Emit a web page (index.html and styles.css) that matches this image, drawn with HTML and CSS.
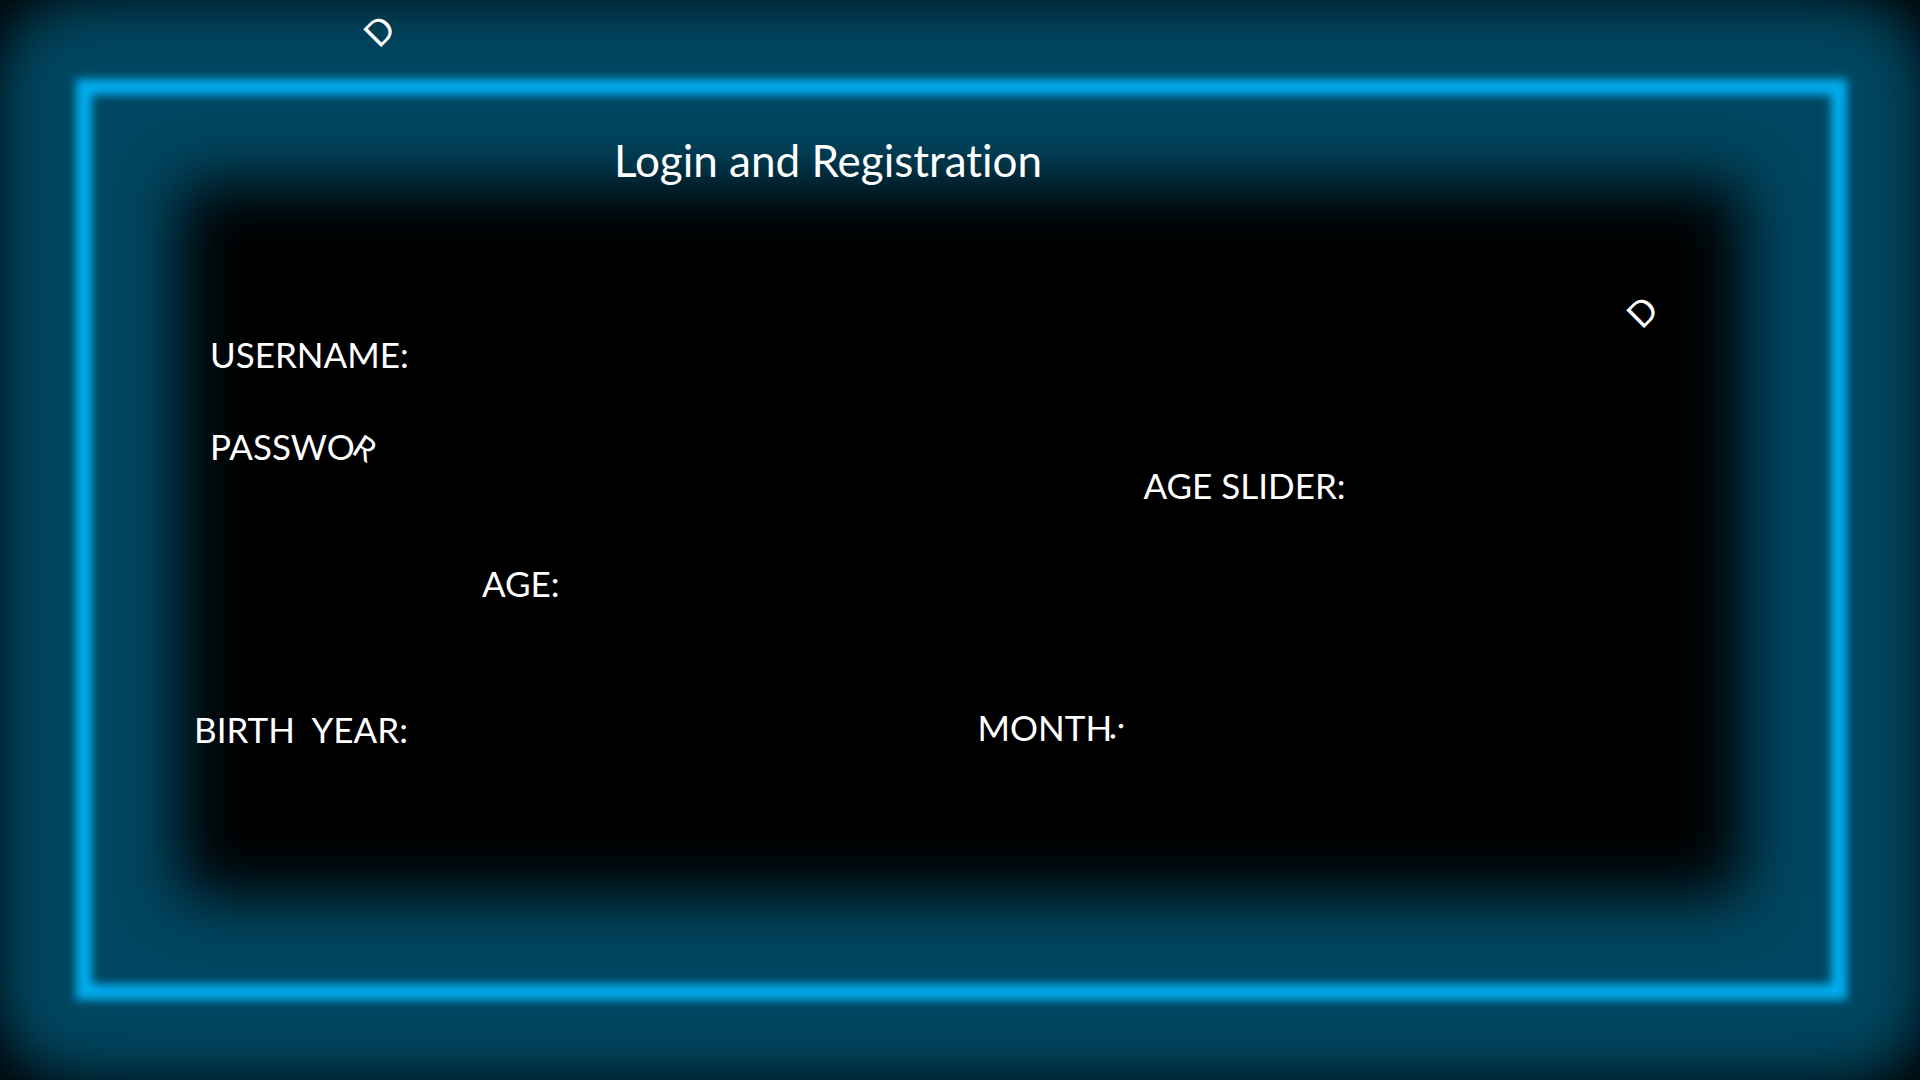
FILE: index.html
```html
<!DOCTYPE html>
<html lang="en">
<head>
<meta charset="utf-8">
<title>Login and Registration</title>
<link rel="stylesheet" href="styles.css">
</head>
<body>
<main class="page">
  <section class="frame">
    <h1 class="title">Login and Registration</h1>
    <div class="fields">
      <div class="column account">
        <div class="field username">USERNAME:</div>
        <div class="field password">PASSWO<span class="falling">R</span></div>
        <div class="field age">AGE:</div>
        <div class="field">BIRTH&nbsp; YEAR:</div>
      </div>
      <div class="column details">
        <div class="field slider">AGE SLIDER:</div>
        <div class="field">MONTH<span class="falling loose">:</span></div>
      </div>
    </div>
  </section>
  <span class="letter letter-top" aria-hidden="true">D</span>
  <span class="letter letter-right" aria-hidden="true">D</span>
</main>
</body>
</html>
```
FILE: styles.css
```css
* {
  box-sizing: border-box;
}

body {
  margin: 0;
  background: #000;
  color: #fff;
  font-family: Lato, "Open Sans", sans-serif;
  font-size: 35px;
  font-variant-ligatures: none;
  line-height: 40px;
}

.page {
  position: relative;
  display: flex;
  min-height: 100vh;
  padding: 79px 73px 80px 76px;
  overflow: hidden;
}

.frame {
  position: relative;
  isolation: isolate;
  flex: 1;
  padding: 56px 86px 0 118px;
}

/* Wide soft halo on both sides of the line */
.frame::before {
  content: "";
  position: absolute;
  z-index: -2;
  inset: -84px;
  border: 188px solid #004660;
  border-radius: 88px;
  filter: blur(31px);
}

/* Bright neon line */
.frame::after {
  content: "";
  position: absolute;
  z-index: -1;
  inset: 0;
  border: 16px solid #00adef;
  filter: blur(5px);
}

.title {
  margin: 0 0 149px;
  padding-left: 420px;
  font-size: 44px;
  font-weight: 400;
  line-height: 50px;
}

.fields {
  display: grid;
  grid-template-columns: 1fr 1fr;
}

.column {
  display: flex;
  flex-direction: column;
}

.details {
  padding-top: 131px;
}

.username {
  margin: 0 0 52px 16px;
}

.password {
  margin: 0 0 95px 16px;
}

.age {
  margin: 0 0 106px 288px;
}

.slider {
  margin: 0 0 202px 166px;
}

.falling {
  display: inline-block;
  font-size: 32px;
  transform: rotate(32deg);
}

.loose {
  margin-left: 4px;
  font-size: 35px;
  transform: rotate(38deg);
}

.letter {
  position: absolute;
  transform: rotate(-45deg);
}

.letter-top {
  top: 10px;
  left: 365px;
}

.letter-right {
  top: 291px;
  right: 265px;
}
```
